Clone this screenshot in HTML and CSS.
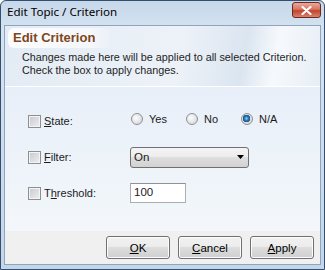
FILE: index.html
```html
<!DOCTYPE html>
<html lang="en">
<head>
  <meta charset="UTF-8">
  <title>Edit Topic / Criterion</title>
  <link rel="stylesheet" href="styles.css">
</head>
<body>
  <div class="window">
    <div class="titlebar">
      <span class="title">Edit Topic / Criterion</span>
      <span class="close-btn">
        <svg width="11" height="9" viewBox="0 0 11 9">
          <path d="M1.5 1 L9.5 8 M9.5 1 L1.5 8" stroke="#fff" stroke-width="2.2" stroke-linecap="round"/>
        </svg>
      </span>
    </div>
    <div class="client">
      <div class="header">
        <div class="heading">Edit Criterion</div>
        <p class="desc">Changes made here will be applied to all selected Criterion.<br>Check the box to apply changes.</p>
      </div>
      <div class="body">
        <div class="row">
          <span class="checkbox"></span>
          <span class="label"><u>S</u>tate:</span>
          <div class="radios">
            <span class="option"><span class="radio"></span>Yes</span>
            <span class="option"><span class="radio"></span>No</span>
            <span class="option"><span class="radio checked"></span>N/A</span>
          </div>
        </div>
        <div class="row">
          <span class="checkbox"></span>
          <span class="label"><u>F</u>ilter:</span>
          <div class="combo">
            <span>On</span>
            <svg width="7" height="4" viewBox="0 0 7 4"><path d="M0 0 H7 L3.5 4 Z" fill="#000"/></svg>
          </div>
        </div>
        <div class="row">
          <span class="checkbox"></span>
          <span class="label">T<u>h</u>reshold:</span>
          <div class="textbox">100</div>
        </div>
      </div>
      <div class="footer">
        <button class="btn"><u>O</u>K</button>
        <button class="btn"><u>C</u>ancel</button>
        <button class="btn"><u>A</u>pply</button>
      </div>
    </div>
  </div>
</body>
</html>
```

FILE: styles.css
```css
body {
  margin: 0;
  padding: 0;
  font-family: "Liberation Sans", Arial, sans-serif;
}

.window {
  box-sizing: border-box;
  width: 325px;
  height: 270px;
  border: 1px solid #34506e;
  border-radius: 6px 6px 0 0;
  background: linear-gradient(#c7d8ea, #d6e3f1 30px, #c4d6ea);
  display: flex;
  flex-direction: column;
  padding: 0 3px 4px 3px;
}

.titlebar {
  height: 24px;
  display: flex;
  align-items: center;
  justify-content: space-between;
}

.title {
  font-family: "Noto Sans", sans-serif;
  font-size: 11.6px;
  color: #000;
  padding-left: 3px;
  margin-top: -3px;
}

.close-btn {
  width: 27px;
  height: 14px;
  margin-top: -6px;
  border: 1px solid #6d2a20;
  border-radius: 3px;
  background: linear-gradient(#e9a99c, #d7735f 45%, #c2442c 55%, #d7826c);
  display: flex;
  align-items: center;
  justify-content: center;
}

.client {
  flex: 1;
  display: flex;
  flex-direction: column;
  border: 1px solid #8fa4bd;
  background: #eef3f9;
}

.header {
  height: 60px;
  border-bottom: 1px solid #fff;
  background: linear-gradient(100deg, #e3ebf4 0%, #edf2f8 55%, #dbe5f0 75%, #f6f9fc 85%, #e7eef6 100%);
}

.heading {
  width: 98px;
  height: 20px;
  margin: 2px 0 0 3px;
  padding-left: 5px;
  border-radius: 6px;
  background: linear-gradient(90deg, #fbfcfe, #f4f7fb 80%, #ebf0f7);
  font-weight: bold;
  font-size: 13px;
  line-height: 20px;
  color: #80461b;
}

.desc {
  margin: 3px 0 0 17px;
  font-size: 10.8px;
  line-height: 13px;
  white-space: nowrap;
  color: #1e1e1e;
}

.body {
  flex: 1;
  padding: 23px 0 0 23px;
  display: flex;
  flex-direction: column;
  gap: 14px;
  background: linear-gradient(#e8eff8, #f3f7fb);
  font-size: 11px;
  color: #1b1b1b;
}

.row {
  height: 22px;
  display: flex;
  align-items: center;
}

.checkbox {
  box-sizing: border-box;
  width: 13px;
  height: 13px;
  margin-right: 3px;
  border: 1px solid #8e8f8f;
  box-shadow: inset 0 0 0 1px #f4f4f4;
  background: linear-gradient(135deg, #c6c9cf, #eeeff1);
}

.label {
  width: 86px;
}

.radios {
  display: flex;
  margin-top: -4px;
}

.option {
  display: flex;
  align-items: center;
  width: 55px;
}

.radio {
  box-sizing: border-box;
  width: 12px;
  height: 12px;
  margin: 0 6px 0 1px;
  border-radius: 50%;
  border: 1px solid #8e9297;
  background: radial-gradient(circle at 40% 40%, #fdfdfd, #d6d9dd 80%);
}

.radio.checked {
  background: radial-gradient(circle at 45% 45%, #7fd0f5 0, #2a7fb8 2px, #1c4f7d 3.5px, #dfe3e8 4px, #c9ced4 100%);
}

.combo {
  box-sizing: border-box;
  width: 119px;
  height: 21px;
  border: 1px solid #707070;
  border-radius: 3px;
  background: linear-gradient(#f4f4f4, #ececec 50%, #dedede 50%, #d2d2d2);
  display: flex;
  align-items: center;
  justify-content: space-between;
  padding: 0 4px 0 3px;
  font-size: 11.5px;
}

.textbox {
  box-sizing: border-box;
  width: 56px;
  height: 20px;
  border: 1px solid #abadb3;
  border-top-color: #8e9298;
  background: #fff;
  padding: 2px 0 0 3px;
  font-size: 11.5px;
}

.footer {
  height: 33px;
  background: #f0f0f0;
  display: flex;
  justify-content: flex-end;
  align-items: center;
  gap: 8px;
  padding-right: 6px;
}

.btn {
  box-sizing: border-box;
  width: 64px;
  height: 23px;
  border: 1px solid #707070;
  border-radius: 3px;
  background: linear-gradient(#f2f2f2, #ebebeb 50%, #dddddd 50%, #cfcfcf);
  box-shadow: inset 0 0 0 1px #fcfcfc;
  font-family: "Liberation Sans", Arial, sans-serif;
  font-size: 11.5px;
  color: #000;
  padding: 0;
}
```
